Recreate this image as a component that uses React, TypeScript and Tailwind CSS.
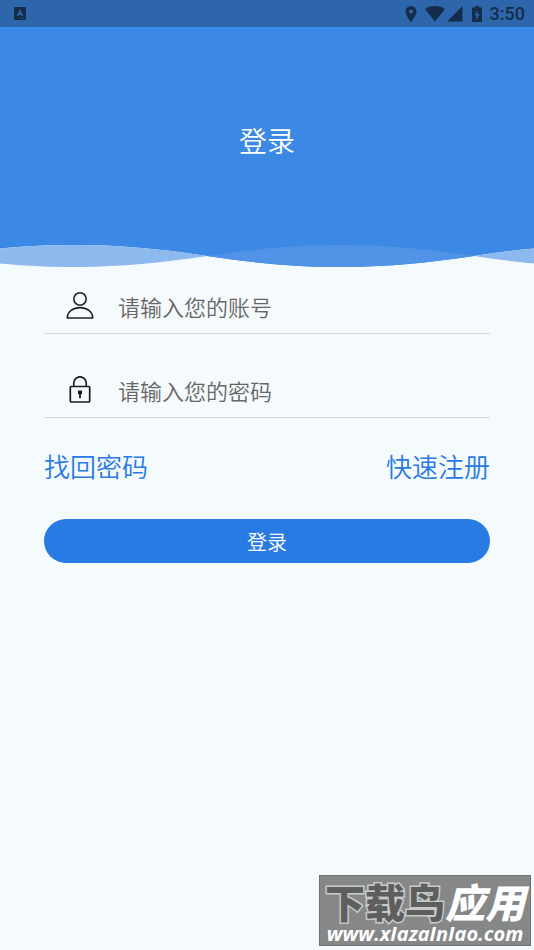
import { useState } from 'react';

interface FieldProps {
  id: string;
  label: string;
  type: string;
  icon: React.ReactNode;
}

function StatusBar() {
  return (
    <div className="flex h-[27px] items-center justify-between bg-[#2d66ab] pr-[9px] pl-3.5 text-[#152c4a]">
      <svg className="h-[13px] w-3" viewBox="0 0 12 13" aria-hidden="true">
        <rect width="12" height="13" rx="1" fill="currentColor" />
        <path d="M3.5 9 6 3.500 8.500 9M4.300 7.200h3.400" fill="none" stroke="#2d66ab" strokeWidth="1.500" />
        <path d="M6.500 11.500h4" stroke="#2d66ab" strokeWidth="0.500" />
      </svg>
      <div className="flex items-center">
        <svg className="mr-2 h-4 w-3" viewBox="0 0 12 16" fill="currentColor" aria-hidden="true">
          <path d="M6 0a5.500 5.500 0 0 0-5.500 5.500C.5 9.500 6 16 6 16s5.500-6.500 5.500-10.500A5.500 5.500 0 0 0 6 0Zm0 7.500a2 2 0 1 1 0-4 2 2 0 0 1 0 4Z" />
        </svg>
        <svg className="mr-0.5 h-4 w-5" viewBox="0 0 20 16" fill="currentColor" aria-hidden="true">
          <path d="M10 15.500 0 3C2.500 1 6 0 10 0s7.500 1 10 3Z" />
        </svg>
        <svg className="mr-2 h-4 w-4" viewBox="0 0 16 16" fill="currentColor" aria-hidden="true">
          <path d="M0 15.500 15.500 0v15.500Z" />
        </svg>
        <svg className="mr-[7px] h-4 w-3" viewBox="0 0 12 16" fill="currentColor" aria-hidden="true">
          <path d="M1 1.500h3V0h4v1.500h3V16H1Z" />
          <path d="M7 4 3.300 9.300h2.200L5 14l3.800-5.800H6.500Z" fill="#2d66ab" />
        </svg>
        <span className="font-['Roboto',sans-serif] text-lg font-medium">3:50</span>
      </div>
    </div>
  );
}

function Waves() {
  return (
    <svg className="block h-[22px] w-full" viewBox="0 0 534 22" preserveAspectRatio="none" aria-hidden="true">
      <path
        d="M-60 0V11C37-3.700 110-3.700 207 11C304 25.700 377 25.700 474 11C571-3.700 644-3.700 741 11V0Z"
        fill="#3c89e5"
      />
      <path d="M-60 11C37-3.700 110-3.700 207 11C110 25.700 37 25.700-60 11Z" fill="#8db9ef" />
      <path d="M207 11C304-3.700 377-3.700 474 11C377 25.700 304 25.700 207 11Z" fill="#5093e7" />
      <path d="M474 11C571-3.700 644-3.700 741 11C644 25.700 571 25.700 474 11Z" fill="#8db9ef" />
    </svg>
  );
}

function UserIcon() {
  return (
    <svg className="h-7 w-7" viewBox="0 0 28 28" fill="none" stroke="#222" strokeWidth="1.600" aria-hidden="true">
      <circle cx="14" cy="7" r="6.200" />
      <path d="M1.300 26C1.300 19.500 7 15.600 14 15.600S26.700 19.500 26.700 26Z" strokeLinejoin="round" />
    </svg>
  );
}

function LockIcon() {
  return (
    <svg className="h-7 w-7" viewBox="0 0 28 28" fill="none" stroke="#1c1c1c" strokeWidth="1.700" aria-hidden="true">
      <rect x="4.300" y="10.500" width="19.400" height="15.500" rx="1" />
      <path d="M7.800 10.500V7a6.200 6.200 0 0 1 12.400 0v3.500" />
      <path d="M12 14.500h4v3.800h-1.100v4h-1.800v-4H12Z" fill="#1c1c1c" stroke="none" />
    </svg>
  );
}

function Field({ id, label, type, icon }: FieldProps) {
  const [value, setValue] = useState('');

  return (
    <div className="flex h-14 items-center border-b border-[#d5d9dc] pl-[22px]">
      <label htmlFor={id} aria-label={label} className="mr-6 shrink-0">
        {icon}
      </label>
      <input
        id={id}
        type={type}
        value={value}
        onChange={(e) => setValue(e.target.value)}
        placeholder={label}
        className="min-w-0 flex-1 bg-transparent text-[22px] leading-8 font-[350] text-[#333] outline-none placeholder:text-[#666]"
      />
    </div>
  );
}

export default function App() {
  return (
    <div className="relative min-h-screen bg-[#f5fafd] font-['Noto_Sans_CJK_SC',sans-serif]">
      <StatusBar />
      <header className="flex h-[218px] items-center justify-center bg-[#3c89e5] pt-2">
        <h1 className="text-[28px] leading-10 font-[350] text-white">登录</h1>
      </header>
      <Waves />

      <form className="px-11 pt-[11px]" onSubmit={(e) => e.preventDefault()}>
        <Field id="account" type="text" label="请输入您的账号" icon={<UserIcon />} />
        <div className="mt-7">
          <Field id="password" type="password" label="请输入您的密码" icon={<LockIcon />} />
        </div>
        <div className="mt-7 flex justify-between text-[26px] leading-10 font-[350] text-[#287be3]">
          <a href="#recover">找回密码</a>
          <a href="#register">快速注册</a>
        </div>
        <button
          type="submit"
          className="mt-[33px] h-11 w-full rounded-full bg-[#287be3] pt-0.5 text-xl font-[350] text-white"
        >
          登录
        </button>
      </form>

      <div className="absolute right-[3px] bottom-1 h-[71px] w-[212px] border border-[#6d7070] bg-[#868888] text-center whitespace-nowrap">
        <p className="text-[40px] leading-[50px] font-black text-white">
          <span className="text-[#5d5f5f] [paint-order:stroke] [-webkit-text-stroke:3px_#c8caca]">下载鸟</span>
          <span className="italic">应用</span>
        </p>
        <p className="-mt-1 font-['Open_Sans',sans-serif] text-xl leading-6 font-bold text-white italic">
          www.xIazaInIao.com
        </p>
      </div>
    </div>
  );
}
